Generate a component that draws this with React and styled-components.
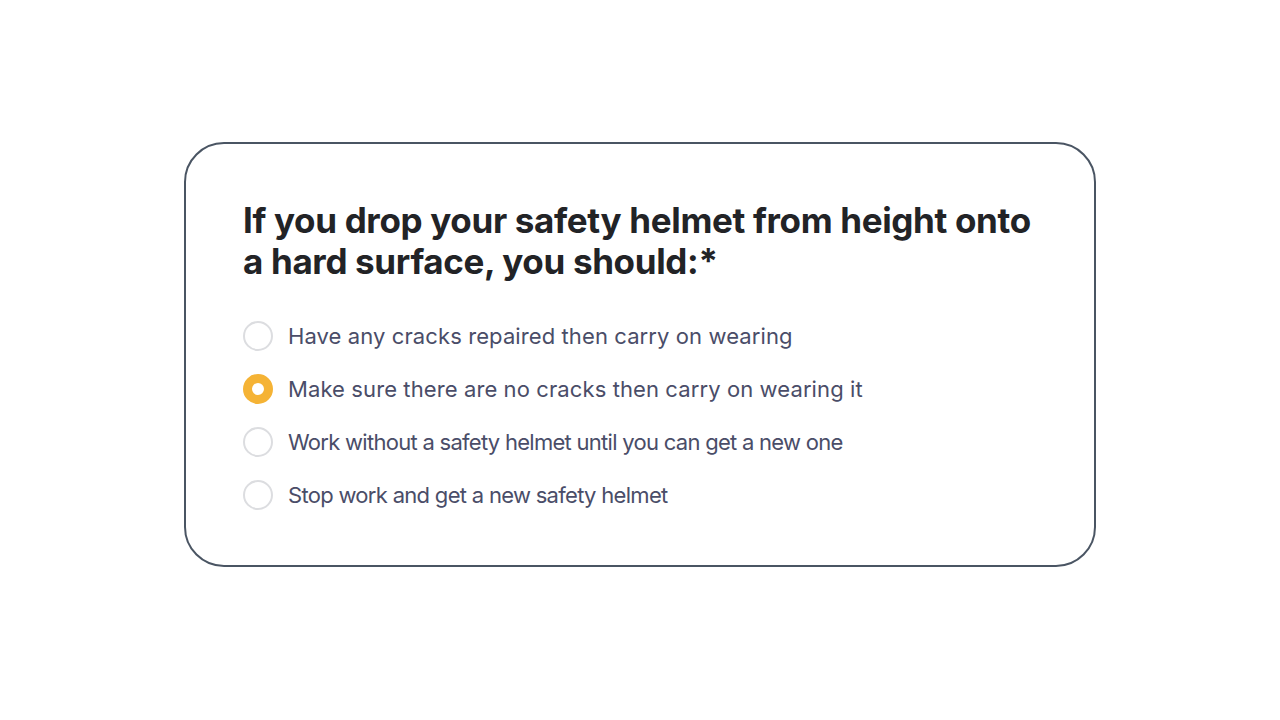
import React, { useState } from "react";
import styled, { createGlobalStyle } from "styled-components";

const GlobalStyle = createGlobalStyle`
  html, body {
    margin: 0;
    padding: 0;
    background: #ffffff;
    font-family: Inter, "Noto Sans", sans-serif;
  }
`;

const Page = styled.div`
  width: 1280px;
  height: 720px;
  box-sizing: border-box;
  padding-top: 142px;
  display: flex;
  align-items: flex-start;
  justify-content: center;
`;

const Card = styled.div`
  width: 912px;
  box-sizing: border-box;
  border: 2px solid #4a5563;
  border-radius: 40px;
  padding: 56px 57px 55px;
`;

const Question = styled.h2`
  margin: 0 0 39px;
  font-size: 35px;
  line-height: 41px;
  font-weight: 700;
  color: #222326;
  letter-spacing: -0.34px;
`;

const Options = styled.div`
  display: flex;
  flex-direction: column;
  gap: 23px;
`;

const Option = styled.label`
  display: flex;
  align-items: center;
  gap: 15px;
  cursor: pointer;
  font-size: 22px;
  line-height: 30px;
  color: #4a4d68;
  letter-spacing: ${(p) => p.$spacing}px;
`;

const Radio = styled.span`
  width: 30px;
  height: 30px;
  box-sizing: border-box;
  border-radius: 50%;
  flex-shrink: 0;
  border: ${(p) => (p.$checked ? "9px solid #f5b335" : "2px solid #dcdde0")};
  background: #ffffff;
`;

const answers = [
  { text: "Have any cracks repaired then carry on wearing", spacing: 0.1 },
  { text: "Make sure there are no cracks then carry on wearing it", spacing: 0.1 },
  { text: "Work without a safety helmet until you can get a new one", spacing: -0.72 },
  { text: "Stop work and get a new safety helmet", spacing: -0.7 },
];

export default function App() {
  const [selected, setSelected] = useState(1);
  return (
    <>
      <GlobalStyle />
      <Page>
        <Card>
          <Question>
            If you drop your safety helmet from height onto a hard surface, you should:*
          </Question>
          <Options>
            {answers.map((a, i) => (
              <Option key={a.text} $spacing={a.spacing} onClick={() => setSelected(i)}>
                <Radio $checked={selected === i} />
                {a.text}
              </Option>
            ))}
          </Options>
        </Card>
      </Page>
    </>
  );
}
